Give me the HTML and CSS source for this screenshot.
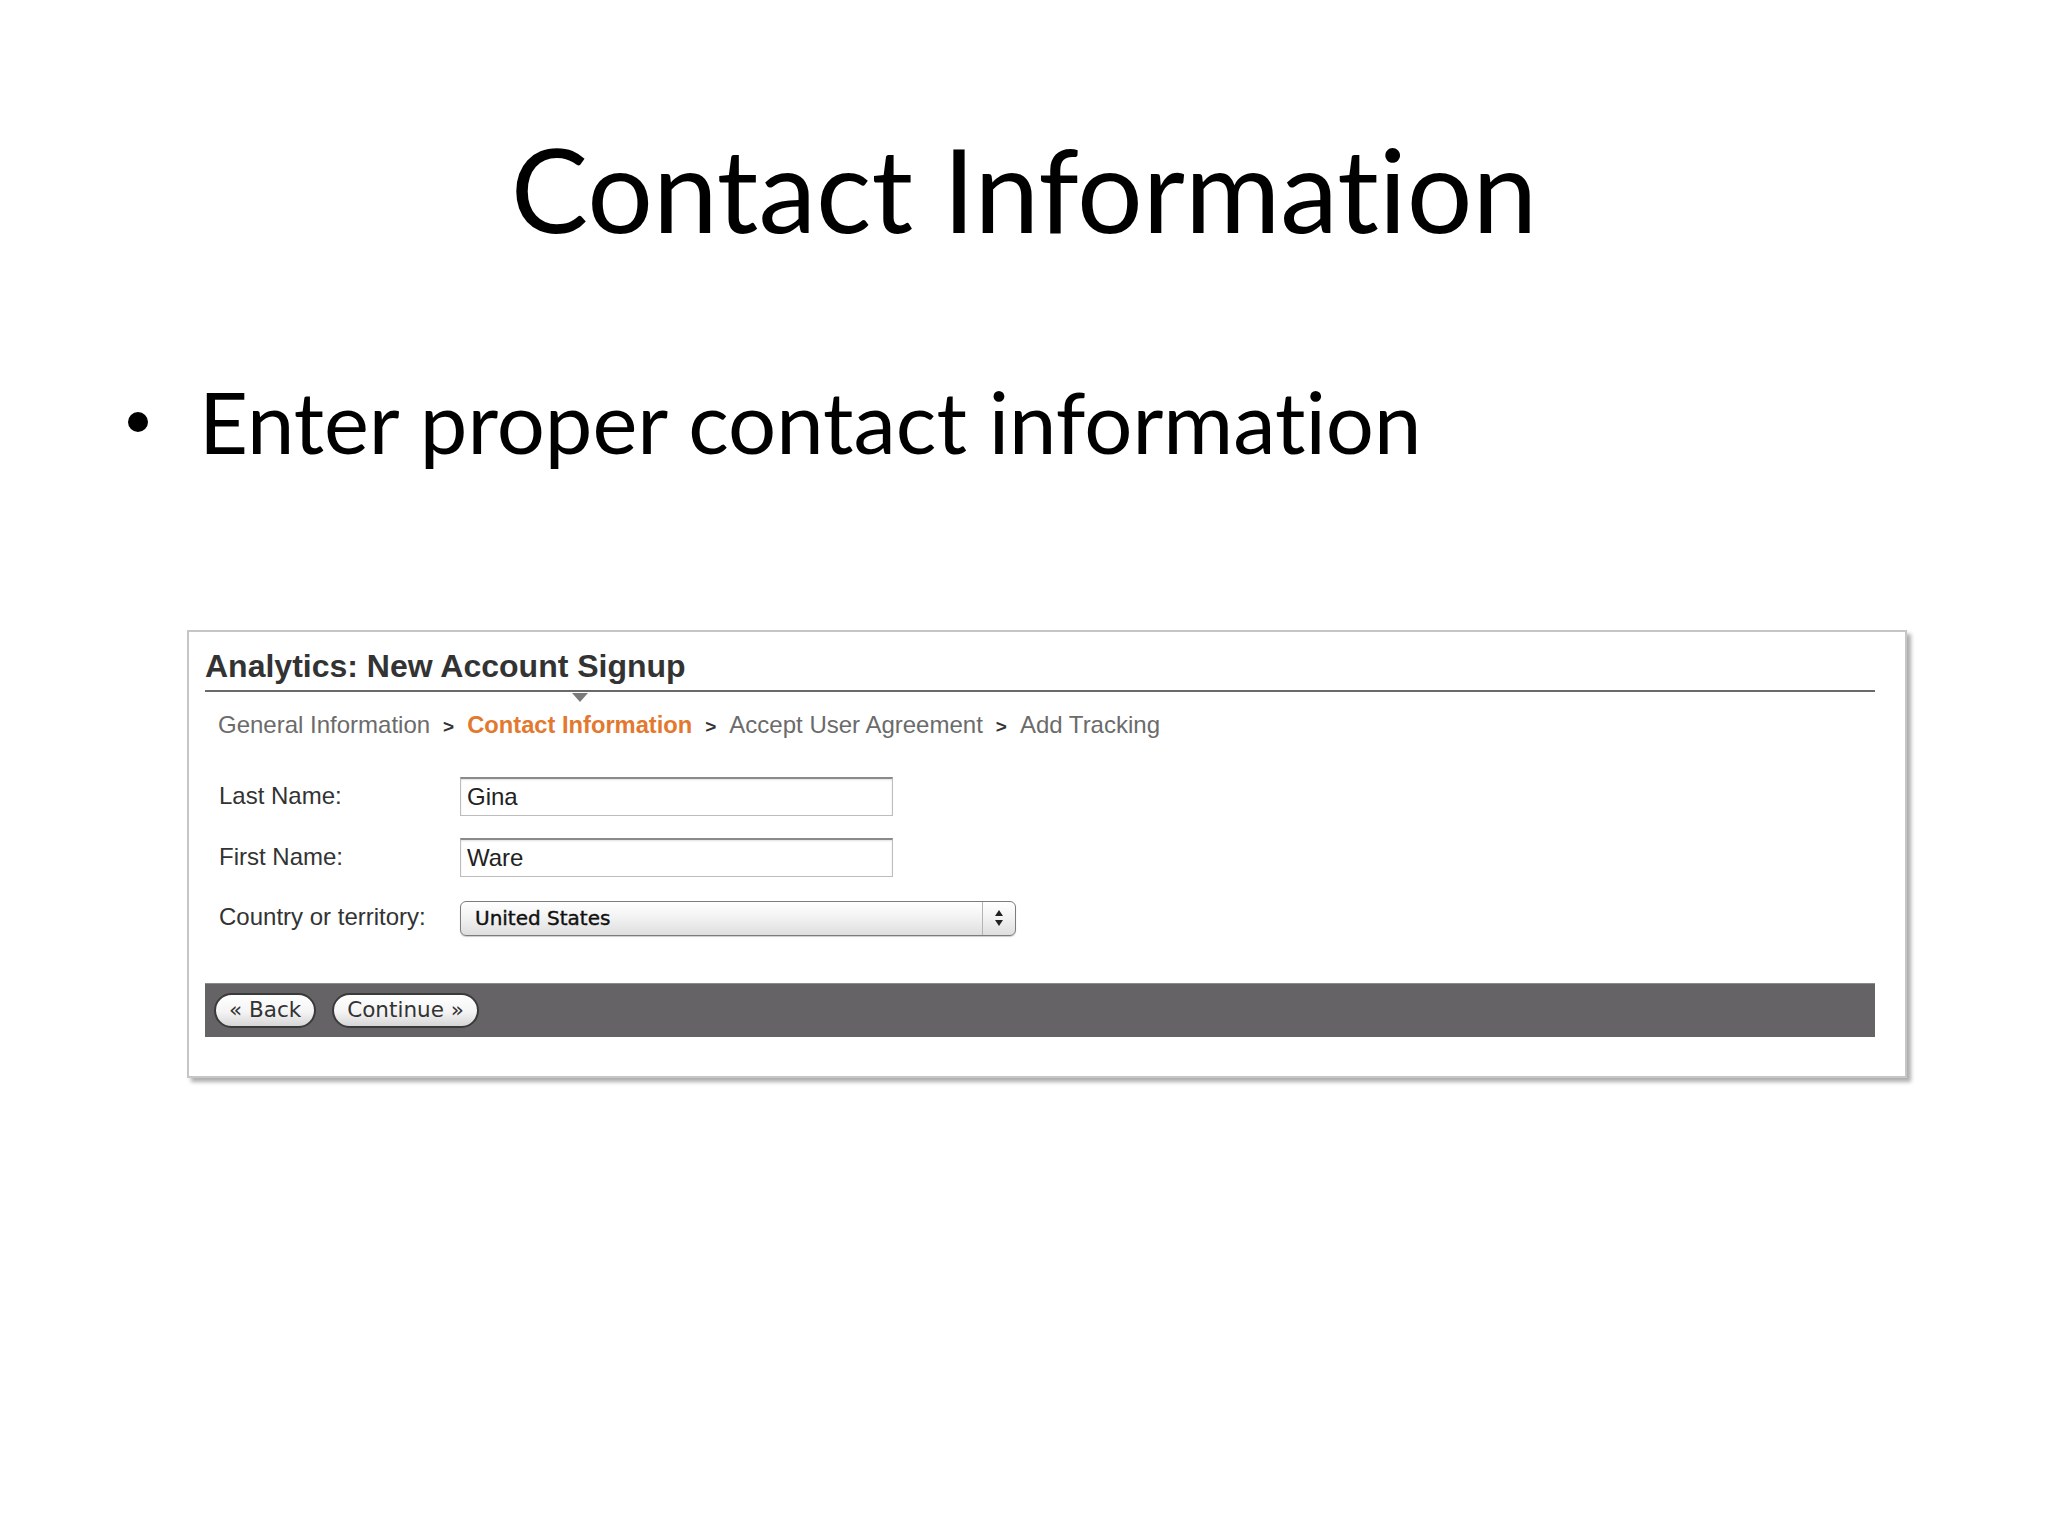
FILE: index.html
```html
<!DOCTYPE html>
<html lang="en">
<head>
    <meta charset="UTF-8">
    <title>Contact Information</title>
    <link rel="stylesheet" href="styles.css">
</head>
<body>
    <div class="slide">
        <h1 class="slide-title">Contact Information</h1>

        <ul class="bullets">
            <li>Enter proper contact information</li>
        </ul>

        <div class="shot">
            <h2 class="signup-title">Analytics: New Account Signup</h2>

            <div class="steps">
                <span class="step">General Information</span>
                <span class="sep">&gt;</span>
                <span class="step current">Contact Information</span>
                <span class="sep">&gt;</span>
                <span class="step">Accept User Agreement</span>
                <span class="sep">&gt;</span>
                <span class="step">Add Tracking</span>
            </div>

            <div class="form">
                <label class="field-label">Last Name:</label>
                <input class="text-input" type="text" value="Gina">

                <label class="field-label">First Name:</label>
                <input class="text-input" type="text" value="Ware">

                <label class="field-label">Country or territory:</label>
                <div class="select">
                    <span class="select-value">United States</span>
                    <span class="select-arrows">
                        <svg width="10" height="18" viewBox="0 0 10 18">
                            <path d="M5 1 L9 7 L1 7 Z" fill="#222"/>
                            <path d="M5 17 L9 11 L1 11 Z" fill="#222"/>
                        </svg>
                    </span>
                </div>
            </div>

            <div class="actions">
                <button class="pill">&laquo; Back</button>
                <button class="pill">Continue &raquo;</button>
            </div>
        </div>
    </div>
</body>
</html>
```

FILE: styles.css
```css
* {
    margin: 0;
    padding: 0;
    box-sizing: border-box;
}

body {
    background: #fff;
    font-family: 'Lato', 'Open Sans', sans-serif;
    color: #000;
}

.slide {
    width: 2048px;
    height: 1536px;
    overflow: hidden;
}

/* slide heading and bullet */
.slide-title {
    padding-top: 131px;
    font-size: 116px;
    font-weight: 400;
    line-height: 1;
    text-align: center;
    font-variant-ligatures: none;
}

.bullets {
    list-style: none;
    margin-top: 132px;
    padding-left: 128px;
}

.bullets li {
    display: flex;
    align-items: center;
    font-size: 85px;
    line-height: 1;
    font-variant-ligatures: none;
}

.bullets li::before {
    content: '';
    width: 20px;
    height: 20px;
    border-radius: 50%;
    background: #000;
    margin-right: 51px;
    flex-shrink: 0;
}

/* embedded signup window */
.shot {
    margin: 166px 0 0 187px;
    width: 1720px;
    padding: 18px 30px 39px 16px;
    background: #fff;
    border: 2px solid #c6c6c6;
    box-shadow: 4px 4px 4px rgba(0, 0, 0, 0.32);
    font-family: 'Liberation Sans', Arial, sans-serif;
}

.signup-title {
    font-size: 32px;
    font-weight: 700;
    line-height: 1;
    color: #333;
    padding-bottom: 8px;
    border-bottom: 2px solid #6a6a6a;
}

.steps {
    display: flex;
    align-items: baseline;
    margin: 21px 0 0 13px;
    font-size: 24px;
    line-height: 1;
    color: #6b6b6b;
}

.step {
    position: relative;
}

.step.current {
    color: #e2792f;
    font-weight: 700;
    font-size: 23.7px;
}

/* little pointer hanging from the rule above the current step */
.step.current::before {
    content: '';
    position: absolute;
    left: 50%;
    top: -21px;
    margin-left: -8px;
    border-left: 8px solid transparent;
    border-right: 8px solid transparent;
    border-top: 9px solid #7a7a7a;
}

.sep {
    margin: 0 13px;
    font-size: 19px;
    font-weight: 700;
    color: #333;
}

.form {
    display: grid;
    grid-template-columns: 241px auto;
    row-gap: 22px;
    align-items: center;
    justify-items: start;
    margin: 39px 0 0 14px;
}

.field-label {
    font-size: 24px;
    color: #333;
}

.text-input {
    width: 433px;
    height: 39px;
    padding: 0 6px;
    font-family: 'Liberation Sans', Arial, sans-serif;
    font-size: 24px;
    color: #222;
    border: 1px solid #bdbdbd;
    border-top: 2px solid #8a8a8a;
    box-shadow: inset 0 1px 2px rgba(0, 0, 0, 0.12);
    outline: none;
}

.select {
    display: flex;
    align-items: stretch;
    width: 556px;
    height: 35px;
    margin-top: 2px;
    border: 1px solid #7c7c7c;
    border-radius: 6px;
    background: linear-gradient(#ffffff, #f3f3f3 45%, #dedede);
    box-shadow: 0 1px 1px rgba(0, 0, 0, 0.2);
    font-family: 'DejaVu Sans', sans-serif;
}

.select-value {
    flex: 1;
    display: flex;
    align-items: center;
    padding-left: 14px;
    font-size: 20px;
    color: #111;
    -webkit-text-stroke: 0.4px #111;
}

.select-arrows {
    width: 33px;
    display: flex;
    align-items: center;
    justify-content: center;
    border-left: 1px solid #b4b4b4;
}

.actions {
    display: flex;
    align-items: center;
    gap: 16px;
    height: 54px;
    margin-top: 47px;
    padding-left: 9px;
    background: #656365;
    border-top: 1px solid #8c8a8c;
}

.pill {
    height: 35px;
    padding: 0 13px 2px;
    border: 2px solid #3a3a3a;
    border-radius: 18px;
    background: linear-gradient(#ffffff, #f4f4f4 55%, #d6d6d6);
    font-family: 'DejaVu Sans', sans-serif;
    font-size: 21.5px;
    color: #333;
}
```
